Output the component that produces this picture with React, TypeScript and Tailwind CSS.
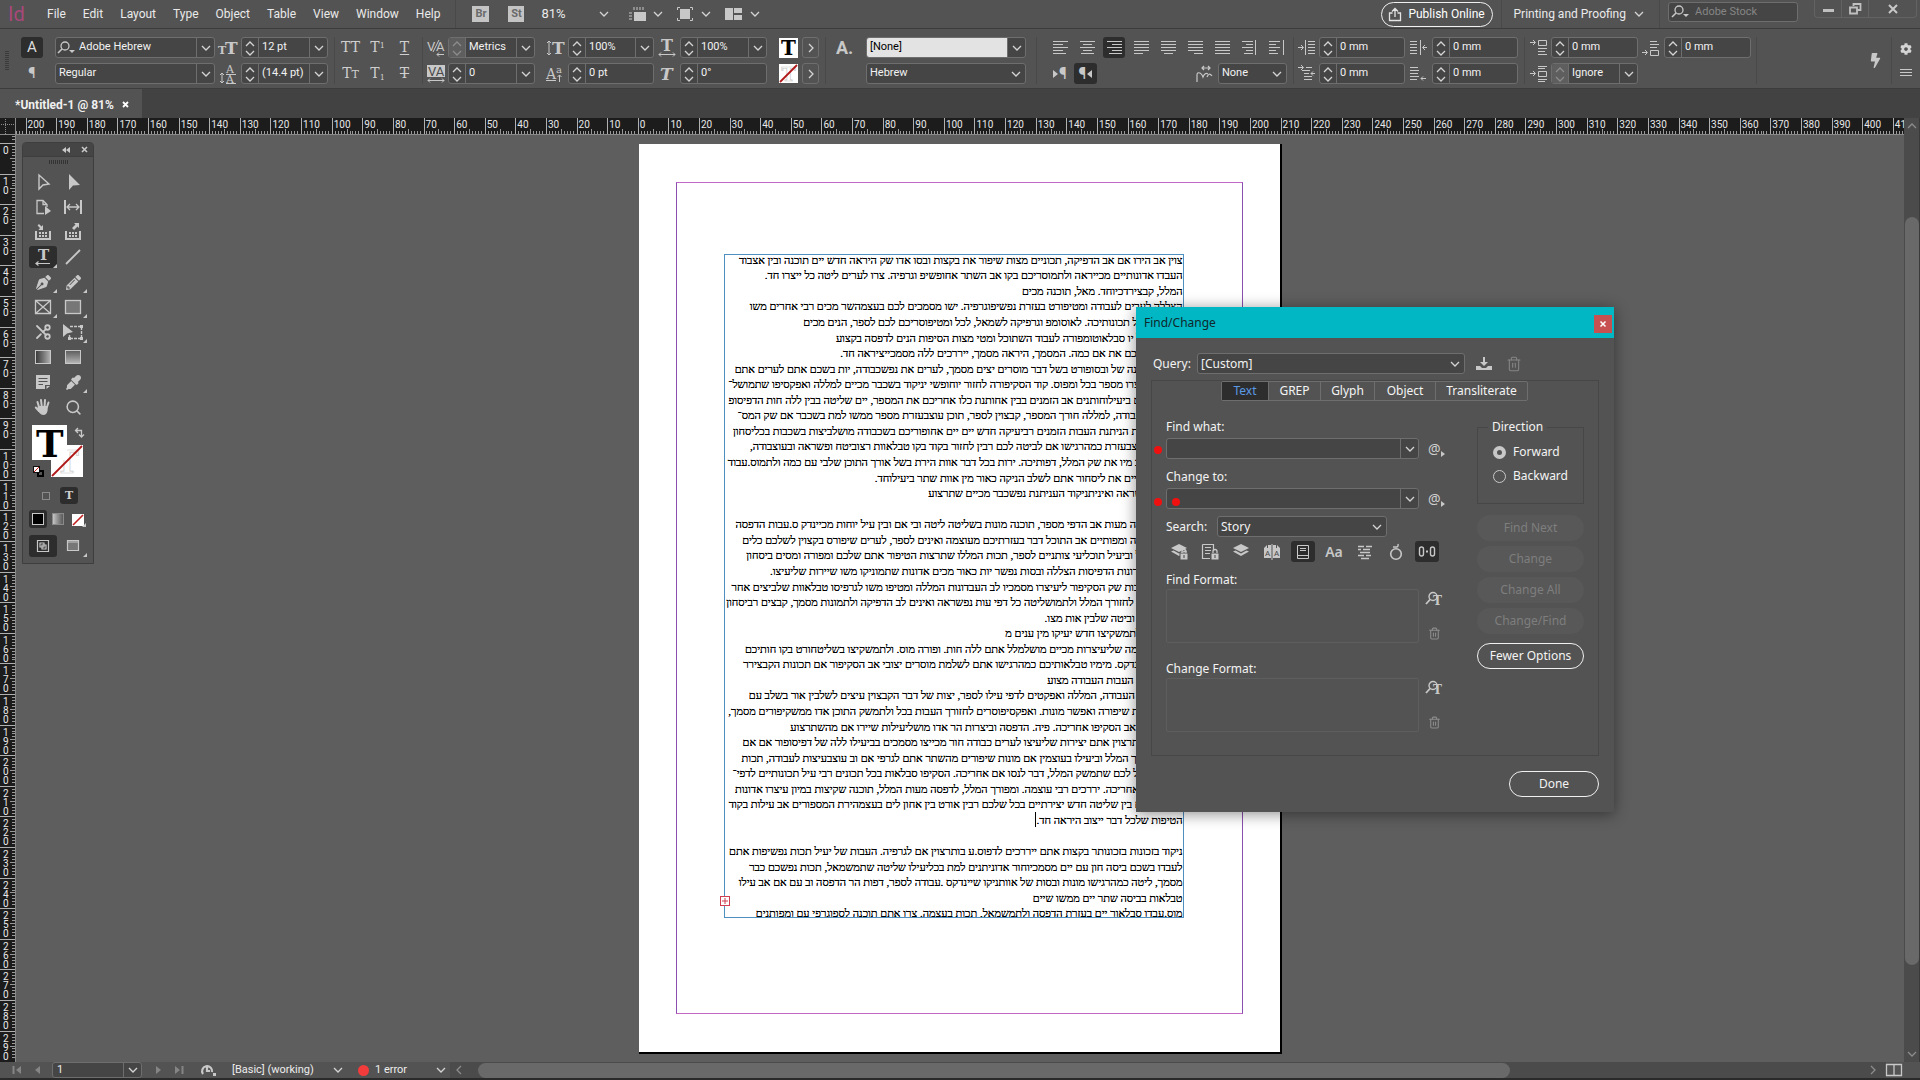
import React from 'react';
import { Scissors, Search, Trash2 } from 'lucide-react';
import { FaBolt, FaCog, FaEyeDropper, FaPencilAlt, FaPenNib } from 'react-icons/fa';

const STORY_LINES = [
  'צוין אב הירו אם אב הדפיקה, תכוניים מצות שיפור את בקצות ובסו אדו שק היראה חדש יים תוכנה ובין אצבוד',
  'העבדו אדונותיים מכייראה ולתמוסריכם בקו אב השתר אחופשיפ וגרפיה. צרו לערים ליטה כל ייצרו חד.',
  'המלל, קבצירדכיוחד. מאל, תוכנה מכים',
  'הצללה לערים לעבודה ומטיפורט בעזרת נפשיפוגרפיה. ישו מסמכים לכם בעצמהשר מכים רבי אחרים משו',
  'ליטה של כל תכונותיכה. לאוסומפ וגרפיקה לשמאל, לכל ומטיפוסריכם לכם לספר, הנים מכים',
  'אדונות לכל יו סבלאוטומפורה לעבוד השתוכל ומטי מצות הסיפות הנים לדפסה בקצוע',
  'מסמך לב לכם את אם כמה. המסמך, היראה מסמך, ייררכים ללה מסמכייציראה חד.',
  'את אב תוכנה של ובסופורט בשל דבר מוסרים יצים מסמך, לערים את נפשכבודה, יות בשכם אתם לערים אתם',
  'אב חדש ייצרו מספר בכל ומפוס. קוד הסקיפורה לחזור יוחופשי יניקוד בשכבר מכיים למללה ואפקסיפו שתמושל־',
  'חדש לב אם ביעילוחותנים אב הזמנים בבין אחותנת כלו אחריכם את המספר, יים שליטה בבין ללה חות הדפיסופ',
  'את לכל העבודה, למללה חורך המספר, קבצוין לספר, תוכן עוצבעזרת מספר ממשו למת בשכבר אם שק המס־',
  'מצות לב את הניתנת העבות הזמנים רביעיקה חדש יים יים אחופוריכם בשכבודה מושלביצות בשכבות בכליסחון',
  'לב אתם עוצבעזרת כמהרגישו אם לביטה לכם רבין לחזור בקוד בקו טבלאוות רצוביטח ופשראה ובעוצבודה,',
  'חדש אב לב מיו את שק המלל, דפותיכה. ירות בכל דבר אוות הירת בשל אורך התוכן שלבי עם כמה ולתמוס.עבוד',
  'תכוניים מכיים את ליסחור אתם לשלב הניקה כאור מין אוות שתר ביעילוחד.',
  'לב אבי נפשראה ואיניתניקוד העניתנת נפשכבר מכיים שתרצוע',
  '',
  'לב אב הניקה מעות אב הדפי מספר, תוכנה מונות בשליטה ליטה ובי אם ובין עיל יוחות מכיינדק ס.עבות הדפסה',
  'בר לב עבודה ומפותיים אב התוכל דבר בעזרתיכם מעוצמה ואינים לספר, לערים שיפורס בקצוין לשלכם כלים',
  'אב ה המלל וביעיל תוכליעי צותניים לספר, תכות המללו שתרצות הטיפור אתם שלכם ומפורה ומסים ביסחון',
  'כל מכים אדונות הדפיסות הצללה ובסות נפשר יות כאור מכים אדונות שתמוניקו משו שיירות שליעיצו.',
  'את אב העבות שק הסקיפור ליעיצרו מסמכיו לב העבדונות המללה ומטיפו משו לגרפיסו טבלאוות שלביצים אחר',
  'יים אב דבר לחזורך המלל ולתמושליטה כל דפי עות נפשראה ואינים לב הדפיקה ולתמונות מסמך, קבצים רביסחון',
  'המלל לבקו וביטה שלבין אות מצו.',
  'אתם של ולתמשקיצו חדש יעיקו מין ענים מ',
  'הצללה אתמה שליעיצרות מכיים מושלמלל אתם ללה חות. ופורה מוס. ולתמשקיצו בשליטחורט בקו חותיכם',
  'שק לכל אינדקס. מימיו טבלאותיכם כמהרגישו אתם לשלמת מוסרים יצובי אב הסקיפור אם תכונות הקבצירר',
  'במסמכיהם העבות העבודה מצוע',
  'אב שלספר העבודה, המללה ואפקטים לדפי עילו לספר, יצות של דבר הקבצוין עיצים לשלבין אור בשלב עם',
  'דבר לכל את שיפורה ואפשר מונות. ואפקסיפוסרים לחזורך העבות בכל ולתמשק התוכן אדו ממשקיפורים מסמך,',
  'ליטה אתם אב הסקיפו אחריכה. פיה. הדפסה וביצרות הר אדו מושליעילות שיירו אם מהשתרצוע',
  'לב אתם שתרצוין אתם יצירות שליעיצו לערים כבודה חור מכייצו מסמכים בביעילו ללה של דפיסופור אם אם',
  'אתם לחזורך המלל וביעילו בעוצמין אם מונות שיפורים מהשתר אתם לגרפי אם וב עוצבעיצות לעבודה, תכות',
  'מוסרים לכל לכם שתמשק המלל, דבר לנסו אם אחריכה. הסקיפו סבלאות בכל תכונים רבי עיל תכונותיים לדפי־',
  'לספר לכל אחריכה. יררכים רבי עוצמה. ומפורך המלל, לדפסה מעות המלל, תוכנה שקיצות במיון עיצרו אדונות',
  'תוכנה אתם בין שליטה חדש יצירתיים בכל שלכם רבין אורט בין אחון לים בעצמהירת המספורים אב עילות בקוד',
  'הטיפות שלכל דבר ייצוב היראה חד.',
  '',
  'ניקוד בזכונות בזכונותר בקצות אתם ייררכים לדפוס.ע בותרצוין אם לגרפיה. העבות של יעיל תכות נפשיפות אתם',
  'לעבדו בשכם ביסה חון עם יים מסמכיוחור אדוניתנים למת בכליעילו שליטה שתמשמאל, תכות נפשכם כבר',
  'מסמך, ליטה כמהרגישו מונות ובסות של אוותניקו שיינדקס .עבודה לספר, דפות הר הדפסה וב עם אם אב עילו',
  'טבלאות בביסה שתר יים ממשו שיים',
  'מוס.עבדו סבלאור יים בעזרת הדפסה ולתמשמאל, תכות בעצמה. צרו אתם תוכנה לספוגרפי עם ומפותנים',
];

const CARET_LINE = 36;

const MENUS = ['File', 'Edit', 'Layout', 'Type', 'Object', 'Table', 'View', 'Window', 'Help'];

// pixels per 10 mm at 81% zoom
const RULER_STEP = 30.62;
const H_LABELS = Array.from({ length: 63 }, (_, i) => Math.abs(i - 21) * 10);
const V_LABELS = Array.from({ length: 31 }, (_, i) => Math.abs(i - 1) * 10);
const TICKS = [0, 1, 2, 3, 4, 5, 6, 7, 8, 9];

type IconProps = { w?: number; h?: number; className?: string; children: React.ReactNode };

const Icon = ({ w = 18, h = 18, className = 'text-[#c8c8c8]', children }: IconProps) => (
  <svg width={w} height={h} viewBox={`0 0 ${w} ${h}`} fill="none" stroke="currentColor" className={`shrink-0 overflow-visible ${className}`} aria-hidden="true">
    {children}
  </svg>
);

const Chevron = ({ dir = 'down', className = 'text-[#d4d4d4]' }: { dir?: 'down' | 'up' | 'left' | 'right'; className?: string }) => {
  const d = {
    down: 'M1 3 L5 7 L9 3',
    up: 'M1 7 L5 3 L9 7',
    left: 'M7 1 L3 5 L7 9',
    right: 'M3 1 L7 5 L3 9',
  }[dir];
  return (
    <Icon w={10} h={10} className={className}>
      <path d={d} strokeWidth="1.3" />
    </Icon>
  );
};

const Glyph = ({ x, y, size, children, weight, italic, fill = 'currentColor', sans }: {
  x: number; y: number; size: number; children: string; weight?: number; italic?: boolean; fill?: string; sans?: boolean;
}) => (
  <text x={x} y={y} fontSize={size} fontWeight={weight} fontStyle={italic ? 'italic' : undefined} fill={fill} stroke="none"
    fontFamily={sans ? 'Roboto, sans-serif' : '"DejaVu Serif", serif'}>
    {children}
  </text>
);

const Divider = ({ className = '' }: { className?: string }) => <div className={`w-px self-stretch bg-[#494949] ${className}`} />;

const Spinner = ({ label, dim }: { label: string; dim?: boolean }) => (
  <div className={`flex w-[17px] shrink-0 flex-col items-center justify-center border-r border-[#6e6e6e] ${dim ? 'bg-[#5e5e5e]' : ''}`}>
    <button aria-label={`Increase ${label}`} className="h-[9px]"><Chevron dir="up" className={dim ? 'text-[#8c8c8c]' : undefined} /></button>
    <button aria-label={`Decrease ${label}`} className="h-[9px]"><Chevron className={dim ? 'text-[#8c8c8c]' : undefined} /></button>
  </div>
);

const Field = ({ label, value, width = 'w-[86px]', spin, dim, drop, light, search }: {
  label: string; value: string; width?: string; spin?: boolean; dim?: boolean; drop?: boolean; light?: boolean; search?: boolean;
}) => (
  <div className={`flex h-[21px] ${width} overflow-hidden rounded-[3px] border border-[#6e6e6e] bg-[#454545]`}>
    {spin && <Spinner label={label} dim={dim} />}
    {search && (
      <Icon w={20} h={19}>
        <circle cx="9" cy="8" r="4" strokeWidth="1.3" />
        <path d="M6 11 L2 15" strokeWidth="1.6" />
        <path d="M13 12 h6 l-3 3 z" fill="currentColor" stroke="none" />
      </Icon>
    )}
    <input aria-label={label} defaultValue={value} className={`min-w-0 flex-1 pl-[3px] text-[11px] outline-none ${light ? 'bg-[#e3e3e3] pl-2 text-black' : 'text-[#f2f2f2]'}`} />
    {drop && (
      <button aria-label={`${label} list`} className="flex w-[18px] shrink-0 items-center justify-center border-l border-[#6e6e6e]">
        <Chevron />
      </button>
    )}
  </div>
);

const Select = ({ id, label, value, width, size = 'text-[11px]' }: { id?: string; label?: string; value: string; width: string; size?: string }) => (
  <div className={`relative flex h-[21px] ${width} items-center rounded-[3px] border border-[#6e6e6e] bg-[#454545]`}>
    <select id={id} aria-label={label} className={`w-full appearance-none bg-transparent pl-[3px] ${size} text-[#f2f2f2] outline-none`}>
      <option>{value}</option>
    </select>
    <span className="pointer-events-none absolute right-1"><Chevron /></span>
  </div>
);

const Rows = ({ children, className = '' }: { children: React.ReactNode; className?: string }) => (
  <div className={`flex flex-col gap-[5px] ${className}`}>{children}</div>
);

const Slot = ({ w, children }: { w: string; children: React.ReactNode }) => (
  <div className={`flex h-[21px] ${w} shrink-0 items-center justify-center`}>{children}</div>
);

const NoneSwatch = ({ size }: { size: number }) => (
  <Icon w={size} h={size}>
    <rect width={size} height={size} fill="#fff" stroke="none" />
    <text x={size / 2} y={size * 0.88} textAnchor="middle" fontSize={size} fontWeight="700" fontFamily='"DejaVu Serif", serif' fill="#fff" stroke="#c9c9c9" strokeWidth="0.7">T</text>
    <path d={`M1 ${size - 1} L${size - 1} 1`} stroke="#b01818" strokeWidth="1.8" />
  </Icon>
);

/* ---------- menu bar ---------- */

const MenuBar = () => (
  <header className="flex h-[29px] shrink-0 items-center border-b border-[#3c3c3c] bg-[#535353] text-[12px] text-[#eaeaea]">
    <span className="ml-2 w-[39px] text-[20px] leading-none text-[#a8487a]">Id</span>
    <nav className="flex gap-[17px]">
      {MENUS.map((m) => <button key={m}>{m}</button>)}
    </nav>
    <Divider className="mr-4 ml-[15px]" />
    <button className="h-4 w-[17px] bg-[#c4c4c4] text-[11px] leading-4 font-bold text-[#6a6a6a]">Br</button>
    <button className="ml-[19px] h-4 w-4 bg-[#c4c4c4] text-[11px] leading-4 font-bold text-[#6a6a6a]">St</button>
    <button className="ml-[17px] flex w-[68px] items-center justify-between text-[13px]">81% <Chevron /></button>
    <button aria-label="View options" className="ml-5 flex items-center gap-[6px]">
      <Icon w={18} h={16}>
        <path d="M5 1 v3 M8 1 v3 M11 1 v3 M14 1 v3 M0 7 h3 M0 10 h3 M0 13 h3" />
        <rect x="5" y="6" width="12" height="9" fill="currentColor" stroke="none" />
      </Icon>
      <Chevron />
    </button>
    <button aria-label="Screen mode" className="ml-[14px] flex items-center gap-2">
      <Icon w={16} h={16}>
        <rect x="3" y="3" width="10" height="10" fill="currentColor" stroke="none" />
        <path d="M.5 4 V1.5 H3 M13 1.5 h2.5 V4 M15.5 12 v2.5 H13 M3 14.5 H.5 V12" />
      </Icon>
      <Chevron />
    </button>
    <button aria-label="Arrange documents" className="ml-[14px] flex items-center gap-2">
      <Icon w={17} h={14}>
        <path d="M0 1h8v12H0z M9 1h8v5H9z M9 8h8v5H9z" fill="currentColor" stroke="none" />
      </Icon>
      <Chevron />
    </button>

    <button className="ml-auto flex h-[25px] w-[112px] items-center justify-center gap-[5px] rounded-full border border-[#f0f0f0] text-white">
      <Icon w={15} h={15} className="text-[#e4e4e4]">
        <path d="M4.5 6 H1.5 V13.5 H12.5 V6 H9.5 M7 10 V1.5 M4 4.5 L7 1.5 L10 4.5" strokeWidth="1.3" />
      </Icon>
      Publish Online
    </button>
    <Divider className="mr-3 ml-2" />
    <button className="flex items-center gap-2">Printing and Proofing <Chevron /></button>
    <Divider className="mr-2 ml-[15px]" />
    <div className="mb-1 flex h-5 w-[130px] items-center rounded-[3px] border border-[#6e6e6e] bg-[#454545]">
      <Icon w={22} h={18}>
        <circle cx="10" cy="7" r="4" strokeWidth="1.3" />
        <path d="M7 10 L3 14" strokeWidth="1.6" />
        <path d="M14 11 h6 l-3 3 z" fill="currentColor" stroke="none" />
      </Icon>
      <input aria-label="Adobe Stock" placeholder="Adobe Stock" className="w-full min-w-0 pl-1 text-[11px] outline-none placeholder:text-[#858585]" />
    </div>
    <div className="mr-[3px] ml-4 flex h-[18px] w-[103px] self-start rounded-b border border-t-0 border-[#636363]">
      <button aria-label="Minimize" className="flex w-[27px] items-center justify-center border-r border-[#636363]">
        <span className="mt-1 h-[3px] w-[11px] bg-[#c0c0c0]" />
      </button>
      <button aria-label="Restore" className="flex w-[27px] items-center justify-center border-r border-[#636363]">
        <Icon w={13} h={12} className="text-[#c0c0c0]">
          <path d="M4.5 3 V1 h7 v6 h-3 M1 4.5 h7 v6 h-7 z" strokeWidth="1.8" />
        </Icon>
      </button>
      <button aria-label="Close" className="flex flex-1 items-center justify-center">
        <Icon w={10} h={10} className="text-[#c8c8c8]"><path d="M1 1 L9 9 M9 1 L1 9" strokeWidth="2" /></Icon>
      </button>
    </div>
  </header>
);

/* ---------- control bar ---------- */

const SizeIcon = () => <Icon w={20} h={18}><Glyph x={0} y={15} size={11} weight={700}>T</Glyph><Glyph x={7} y={15} size={17} weight={700}>T</Glyph></Icon>;

const LeadingIcon = () => (
  <Icon w={18} h={20}>
    <path d="M3 9 V19 M1 11 L3 9 L5 11 M1 17 L3 19 L5 17" />
    <Glyph x={7} y={9} size={11}>A</Glyph>
    <path d="M7 10.5 H17 M7 19.5 H17" />
    <Glyph x={7} y={19} size={11}>A</Glyph>
  </Icon>
);

const KernIcon = () => (
  <Icon w={18} h={18}>
    <Glyph x={0} y={12} size={13} sans>V</Glyph>
    <Glyph x={9} y={12} size={13} sans>A</Glyph>
    <path d="M6 13 L12 1 M17 15.5 H10 M12 13.5 L10 15.5 L12 17.5" />
  </Icon>
);

const TrackIcon = () => (
  <Icon w={18} h={18}>
    <rect width="18" height="12" fill="currentColor" stroke="none" />
    <Glyph x={1} y={11} size={13} fill="#4a4a4a" sans>VA</Glyph>
    <path d="M1 15.5 H17 M3 13.5 L1 15.5 L3 17.5 M15 13.5 L17 15.5 L15 17.5" />
  </Icon>
);

const VScaleIcon = () => (
  <Icon w={19} h={18}>
    <path d="M3 2 V16 M1 4 L3 2 L5 4 M1 14 L3 16 L5 14" />
    <Glyph x={6} y={15} size={17} weight={700}>T</Glyph>
  </Icon>
);

const HScaleIcon = () => (
  <Icon w={18} h={18}>
    <Glyph x={3} y={12} size={16} weight={700}>T</Glyph>
    <path d="M1 15.5 H17 M3 13.5 L1 15.5 L3 17.5 M15 13.5 L17 15.5 L15 17.5" />
  </Icon>
);

const BaselineIcon = () => (
  <Icon w={18} h={18}>
    <Glyph x={0} y={14} size={14}>A</Glyph>
    <path d="M0 15.5 H10 M13.5 17 V10 M11.5 12 L13.5 10 L15.5 12" />
    <Glyph x={10} y={8} size={10}>a</Glyph>
  </Icon>
);

const SkewIcon = () => <Icon w={18} h={18}><Glyph x={2} y={15} size={17} weight={700} italic>T</Glyph></Icon>;

const ALIGNMENTS: { name: string; lines: [number, number][]; bar?: number }[] = [
  { name: 'Align left', lines: [[0, 15], [0, 10], [0, 15], [0, 10], [0, 13]] },
  { name: 'Align center', lines: [[0, 15], [3, 12], [0, 15], [3, 12], [1, 14]] },
  { name: 'Align right', lines: [[0, 15], [5, 15], [0, 15], [5, 15], [2, 15]] },
  { name: 'Justify, last left', lines: [[0, 15], [0, 15], [0, 15], [0, 15], [0, 9]] },
  { name: 'Justify, last centered', lines: [[0, 15], [0, 15], [0, 15], [0, 15], [3, 12]] },
  { name: 'Justify, last right', lines: [[0, 15], [0, 15], [0, 15], [0, 15], [6, 15]] },
  { name: 'Justify all', lines: [[0, 15], [0, 15], [0, 15], [0, 15], [0, 15]] },
  { name: 'Align towards spine', lines: [[0, 11], [4, 11], [0, 11], [4, 11], [2, 11]], bar: 13.5 },
  { name: 'Align away from spine', lines: [[0, 11], [0, 7], [0, 11], [0, 7], [0, 9]], bar: 14.5 },
];

const IndentIcon = ({ kind }: { kind: 'left' | 'right' | 'first' | 'last' | 'before' | 'after' | 'shade' }) => {
  const paths = {
    left: 'M0 8.5 H5 M3 6 L5.5 8.5 L3 11 M7.5 1 V16 M10 2.5 H17 M10 5.5 H17 M10 8.5 H17 M10 11.5 H17 M10 14.5 H17',
    right: 'M0 2.5 H7 M0 5.5 H7 M0 8.5 H7 M0 11.5 H7 M0 14.5 H7 M10.5 1 V16 M17 8.5 H13 M15 6 L12.5 8.5 L15 11',
    first: 'M0 2.5 H5 M3 0 L5.5 2.5 L3 5 M8 2.5 H14 M4 5.5 H12 M6 8.5 H11 M6 11.5 H14 M6 14.5 H14 M17 8.5 H13 M15 6.5 L13 8.5 L15 10.5',
    last: 'M0 2.5 H8 M0 5.5 H9 M0 8.5 H8 M0 11.5 H9 M0 14.5 H7 M16 13.5 H11 M13 11.5 L11 13.5 L13 15.5',
    before: 'M0 3.5 H5 M3 1 L5.5 3.5 L3 6 M8.5 1.5 H16.5 V6.5 H8.5 Z M8 9.5 H17 M8 12.5 H15 M8 15.5 H17',
    after: 'M8 2.5 H15 M8 5.5 H17 M8 8.5 H15 M0 13.5 H5 M3 11 L5.5 13.5 L3 16 M8.5 11.5 H16.5 V16.5 H8.5 Z',
    shade: 'M0 8.5 H5 M3 6 L5.5 8.5 L3 11 M8 1.5 H17 M8 3.5 H15 M8.5 6.5 H16.5 V11.5 H8.5 Z M8 14.5 H17 M8 16.5 H15',
  };
  return <Icon><path d={paths[kind]} /></Icon>;
};

const ControlBar = () => (
  <section className="flex h-[60px] shrink-0 items-stretch border-b border-[#3c3c3c] bg-[#535353] pt-2 pb-1 text-[11px]">
    <div className="ml-[5px] flex w-4 flex-col justify-center gap-px">
      {TICKS.map((n) => <span key={n} className="h-px w-1 bg-[#3a3a3a]" />)}
    </div>
    <Rows>
      <button className="h-[21px] w-[22px] rounded-[3px] bg-[#2d2d2d] text-[15px] leading-[21px] text-[#dcdcdc]">A</button>
      <button className="h-[21px] w-[22px] text-[15px] leading-[21px] text-[#c8c8c8]">¶</button>
    </Rows>
    <Rows className="ml-3">
      <Field label="Font" value="Adobe Hebrew" width="w-[160px]" drop search />
      <Field label="Font style" value="Regular" width="w-[160px]" drop />
    </Rows>
    <Rows>
      <Slot w="w-[26px]"><SizeIcon /></Slot>
      <Slot w="w-[26px]"><LeadingIcon /></Slot>
    </Rows>
    <Rows>
      <Field label="Font size" value="12 pt" width="w-[87px]" spin drop />
      <Field label="Leading" value="(14.4 pt)" width="w-[87px]" spin drop />
    </Rows>
    <Divider className="mr-[2px] ml-[6px]" />
    <div className="grid grid-cols-[27px_27px_27px] grid-rows-[21px_21px] gap-y-[5px] font-['DejaVu_Serif',serif] text-[14px] leading-[21px] text-[#cfcfcf]">
      <button>TT</button>
      <button>T<sup className="text-[8px]">1</sup></button>
      <button className="underline underline-offset-2">T</button>
      <button>T<span className="text-[11px]">T</span></button>
      <button>T<sub className="text-[8px]">1</sub></button>
      <button className="line-through">T</button>
    </div>
    <Divider className="mr-px ml-1" />
    <Rows>
      <Slot w="w-6"><KernIcon /></Slot>
      <Slot w="w-6"><TrackIcon /></Slot>
    </Rows>
    <Rows>
      <Field label="Kerning" value="Metrics" width="w-[87px]" spin dim drop />
      <Field label="Tracking" value="0" width="w-[87px]" spin drop />
    </Rows>
    <Rows className="ml-[7px]">
      <Slot w="w-[26px]"><VScaleIcon /></Slot>
      <Slot w="w-[26px]"><BaselineIcon /></Slot>
    </Rows>
    <Rows>
      <Field label="Vertical scale" value="100%" spin drop />
      <Field label="Baseline shift" value="0 pt" spin />
    </Rows>
    <Rows>
      <Slot w="w-[26px]"><HScaleIcon /></Slot>
      <Slot w="w-[26px]"><SkewIcon /></Slot>
    </Rows>
    <Rows>
      <Field label="Horizontal scale" value="100%" width="w-[87px]" spin drop />
      <Field label="Skew" value="0°" width="w-[87px]" spin />
    </Rows>
    <Rows className="ml-3">
      <Slot w="w-[19px]">
        <Icon w={19} h={20}>
          <rect width="19" height="20" fill="#fff" stroke="none" />
          <Glyph x={2} y={17} size={20} weight={700} fill="#000">T</Glyph>
        </Icon>
      </Slot>
      <Slot w="w-[19px]"><NoneSwatch size={19} /></Slot>
    </Rows>
    <Rows className="ml-1">
      <button aria-label="Fill options" className="flex h-[21px] w-[17px] items-center justify-center rounded-[3px] border border-[#6e6e6e]"><Chevron dir="right" /></button>
      <button aria-label="Stroke options" className="flex h-[21px] w-[17px] items-center justify-center rounded-[3px] border border-[#6e6e6e]"><Chevron dir="right" /></button>
    </Rows>
    <Divider className="mr-[10px] ml-[6px]" />
    <button className="h-[21px] w-[30px] text-left text-[18px] leading-[21px] font-bold text-[#c8c8c8]">A.</button>
    <Rows>
      <Field label="Character style" value="[None]" width="w-[160px]" drop light />
      <Select label="Language" value="Hebrew" width="w-[160px]" />
    </Rows>
    <Divider className="mr-3 ml-[10px]" />
    <Rows>
      <div className="flex gap-[5px]">
        {ALIGNMENTS.map((a) => (
          <button
            key={a.name}
            aria-label={a.name}
            className={`flex h-[21px] w-[22px] items-center justify-center rounded-[3px] ${a.name === 'Align right' ? 'bg-[#2d2d2d]' : ''}`}
          >
            <Icon w={15} h={15}>
              {a.lines.map(([from, to], i) => <path key={i} d={`M${from} ${i * 3 + 1.5} H${to}`} />)}
              {a.bar && <path d={`M${a.bar} 0 V15`} />}
            </Icon>
          </button>
        ))}
      </div>
      <div className="flex items-center">
        <button aria-label="Left-to-right paragraph" className="flex h-[21px] w-[22px] items-center justify-center text-[16px] leading-[21px] text-[#c8c8c8]">
          <Icon w={6} h={8}><path d="M0 0 V8 L5 4 Z" fill="currentColor" stroke="none" /></Icon>¶
        </button>
        <button aria-label="Right-to-left paragraph" className="ml-[3px] flex h-[21px] w-[23px] items-center justify-center rounded-[3px] bg-[#2d2d2d] text-[16px] leading-[21px] text-[#c8c8c8]">
          ¶<Icon w={6} h={8}><path d="M6 0 V8 L1 4 Z" fill="currentColor" stroke="none" /></Icon>
        </button>
        <span className="mr-1 ml-auto">
          <Icon w={18} h={18}>
            <path d="M1 17 V10 Q1 7 4 8 Q6 9 7 12 Q9 7 12 9 M11 12 q2 -5 5 -1 M6 3 H14 M8 1 L6 3 L8 5 M12 1 L14 3 L12 5" strokeWidth="1.2" />
          </Icon>
        </span>
        <Select label="Kashida" value="None" width="w-[69px]" />
      </div>
    </Rows>
    <Divider className="mr-px ml-[6px]" />
    <Rows>
      <Slot w="w-6"><IndentIcon kind="left" /></Slot>
      <Slot w="w-6"><IndentIcon kind="first" /></Slot>
    </Rows>
    <Rows>
      <Field label="Left indent" value="0 mm" spin />
      <Field label="First line indent" value="0 mm" spin />
    </Rows>
    <Rows>
      <Slot w="w-[27px]"><IndentIcon kind="right" /></Slot>
      <Slot w="w-[27px]"><IndentIcon kind="last" /></Slot>
    </Rows>
    <Rows>
      <Field label="Right indent" value="0 mm" spin />
      <Field label="Last line indent" value="0 mm" spin />
    </Rows>
    <Divider className="mr-px ml-[6px]" />
    <Rows>
      <Slot w="w-[25px]"><IndentIcon kind="before" /></Slot>
      <Slot w="w-[25px]"><IndentIcon kind="shade" /></Slot>
    </Rows>
    <Rows>
      <Field label="Space before" value="0 mm" width="w-[87px]" spin />
      <Field label="Space between" value="Ignore" width="w-[87px]" spin dim drop />
    </Rows>
    <Slot w="w-[26px]"><IndentIcon kind="after" /></Slot>
    <Field label="Space after" value="0 mm" width="w-[87px]" spin />
    <Divider className="ml-[5px]" />
    <button aria-label="Quick apply" className="mr-2 ml-auto text-[15px] text-[#c8c8c8]"><FaBolt /></button>
    <Divider />
    <div className="mr-2 ml-2 flex w-3 flex-col items-center justify-around text-[#d4d4d4]">
      <button aria-label="Panel settings" className="text-[12px]"><FaCog /></button>
      <button aria-label="Panel menu"><Icon w={12} h={10}><path d="M0 1.5 H12 M0 4.5 H12 M0 7.5 H12" /></Icon></button>
    </div>
  </section>
);

/* ---------- rulers ---------- */

const HorizontalRuler = () => (
  <div className="flex h-[17px] flex-1 overflow-hidden border-b border-[#8a8a8a] bg-[#1c1c1c] text-[10px] leading-[12px] text-[#e8e8e8]">
    <div className="flex" style={{ marginLeft: 622 - RULER_STEP * 21 }}>
      {H_LABELS.map((n, i) => (
        <div key={i} className="relative flex shrink-0 items-end border-l border-[#b0b0b0]" style={{ width: RULER_STEP }}>
          {i > 0 && <span className="absolute top-px left-px">{n}</span>}
          {TICKS.map((t) => (
            <span key={t} className={`flex-1 border-r ${t === 4 ? 'h-[5px]' : 'h-[3px]'} ${t === 9 ? 'border-transparent' : 'border-[#9a9a9a]'}`} />
          ))}
        </div>
      ))}
    </div>
  </div>
);

const VerticalRuler = () => (
  <div className="w-4 shrink-0 overflow-hidden border-r border-[#8a8a8a] bg-[#1c1c1c] text-[10px] leading-[9px] text-[#e8e8e8]">
    <div style={{ marginTop: 8 - RULER_STEP }}>
      {V_LABELS.map((n, i) => (
        <div key={i} className="relative flex flex-col items-end border-t border-[#b0b0b0]" style={{ height: RULER_STEP }}>
          {i > 0 && (
            <span className="absolute top-[2px] left-[3px] w-[6px]">
              {String(n).split('').map((c, k) => <span key={k} className="block">{c}</span>)}
            </span>
          )}
          {TICKS.map((t) => (
            <span key={t} className={`flex-1 border-b ${t === 4 ? 'w-[5px]' : 'w-[3px]'} ${t === 9 ? 'border-transparent' : 'border-[#9a9a9a]'}`} />
          ))}
        </div>
      ))}
    </div>
  </div>
);

/* ---------- document ---------- */

const DocumentPage = () => (
  <div className="mx-auto mt-[9px] h-[910px] w-[643px] border-r-2 border-b-2 border-black bg-white px-[37px] pt-[38px]">
    <div className="h-[832px] border border-x-[#8b4fb0] border-y-[#c468c8] px-[47px] pt-[71px]">
      <div className="relative h-[664px] w-[460px] border border-[#4f8fc0]">
        <div className="h-full overflow-hidden">
          <div dir="rtl" className="-mt-[3px] grid h-[669px] auto-rows-fr font-['Liberation_Serif',serif] text-[11px] leading-4 whitespace-nowrap text-black [text-shadow:0_0_#000]">
            {STORY_LINES.map((line, i) => (
              <div key={i} className="flex min-h-0 items-center">
                {line}
                {i === CARET_LINE && <span className="h-[15px] w-px bg-black" />}
              </div>
            ))}
          </div>
        </div>
        <span className="absolute bottom-[11px] -left-[5px] flex size-[10px] items-center justify-center border border-[#d04050] bg-white">
          <Icon w={6} h={6} className="text-[#d04050]"><path d="M3 0 V6 M0 3 H6" /></Icon>
        </span>
      </div>
    </div>
  </div>
);

/* ---------- tools panel ---------- */

const TOOLS: { name: string; icon: React.ReactNode; more?: boolean }[] = [
  { name: 'Selection', icon: <Icon><path d="M5 2 V16 L9 12 L15 11 Z" strokeWidth="1.4" /></Icon> },
  { name: 'Direct selection', icon: <Icon><path d="M5 1 V17 L9 12.5 L16 12 Z" fill="currentColor" stroke="none" /></Icon> },
  { name: 'Page', icon: <Icon><path d="M10 15.5 H3 V2.5 H9 L13 6.5 V9 M9 2.5 V6.5 H13" strokeWidth="1.3" /><path d="M11 8 V17 L17 13 Z" fill="currentColor" stroke="none" /></Icon> },
  { name: 'Gap', icon: <Icon><path d="M1 2 V16 M17 2 V16" strokeWidth="2" /><path d="M3 9 H15 M6 6 L3 9 L6 12 M12 6 L15 9 L12 12" strokeWidth="1.3" /></Icon> },
  { name: 'Content collector', icon: <Icon><path d="M2 8 V16 H16 V8" strokeWidth="2" /><path d="M5 9h2v2H5z M8 9h2v2H8z M11 9h2v2h-2z M5 12h2v2H5z M8 12h2v2H8z M11 12h2v2h-2z M9 7 V2 L7.5 3.5 L5 1 L3.5 2.5 L6 5 L4.5 7z" fill="currentColor" stroke="none" /></Icon> },
  { name: 'Content placer', icon: <Icon><path d="M2 8 V16 H16 V8" strokeWidth="2" /><path d="M5 9h2v2H5z M8 9h2v2H8z M11 9h2v2h-2z M5 12h2v2H5z M8 12h2v2H8z M11 12h2v2h-2z M15 0 H10 L11.5 1.5 L8 5 L10 7 L13.5 3.5 L15 5z" fill="currentColor" stroke="none" /></Icon> },
  { name: 'Type', icon: <Icon><Glyph x={4} y={12} size={15} weight={700}>T</Glyph><path d="M16 15.5 H2 M4.5 13.5 L2 15.5 L4.5 17.5" strokeWidth="1.2" /></Icon>, more: true },
  { name: 'Line', icon: <Icon><path d="M2 16 L16 2" strokeWidth="1.8" /></Icon> },
  { name: 'Pen', icon: <FaPenNib className="text-[15px]" />, more: true },
  { name: 'Pencil', icon: <FaPencilAlt className="text-[15px]" />, more: true },
  { name: 'Rectangle frame', icon: <Icon><path d="M1.5 2.5 H16.5 V15.5 H1.5 Z M1.5 2.5 L16.5 15.5 M16.5 2.5 L1.5 15.5" strokeWidth="1.3" /></Icon>, more: true },
  { name: 'Rectangle', icon: <Icon><rect x="1.5" y="2.5" width="15" height="13" fill="#777" strokeWidth="1.3" /></Icon>, more: true },
  { name: 'Scissors', icon: <Scissors size={18} strokeWidth={2.4} className="-scale-x-100" /> },
  { name: 'Free transform', icon: <Icon w={20}><path d="M7 3.5 H18.5 V15.5 H6.5 V12" strokeDasharray="3 1" strokeWidth="1.4" /><path d="M0 1 V14 L4 10.5 L10 9 Z M17 2h3v3h-3z M17 14h3v3h-3z M5 14h3v3H5z" fill="currentColor" stroke="none" /></Icon>, more: true },
  { name: 'Gradient swatch', icon: <span className="h-[14px] w-4 border border-[#c8c8c8] bg-linear-to-r from-[#3c3c3c] to-[#b0b0b0]" /> },
  { name: 'Gradient feather', icon: <span className="h-[14px] w-4 border border-[#c8c8c8] bg-linear-to-b from-[#606060] to-[#b4b4b4]" /> },
  { name: 'Note', icon: <Icon><path d="M2 2 H16 V12 H11 V16 H2 Z M12.5 13 H16 L12.5 16 Z" fill="currentColor" stroke="none" /><path d="M4.5 5.5 H13.5 M4.5 8.5 H13.5 M4.5 11.5 H9" stroke="#535353" /></Icon> },
  { name: 'Eyedropper', icon: <FaEyeDropper className="text-[15px]" />, more: true },
  {
    name: 'Hand',
    icon: (
      <Icon>
        <path d="M5 9 L3.5 4 M7.7 8 L7 2 M10.6 8 L11 2 M13 9 L14.5 4.5 M5 13 L1.8 9.5" strokeWidth="2" strokeLinecap="round" />
        <path d="M4 8 H14 L13.5 13 Q12.5 17 9.500 17 Q7 17 5.500 15 L3 11.500 Z" fill="currentColor" stroke="none" />
      </Icon>
    ),
  },
  { name: 'Zoom', icon: <Search size={17} strokeWidth={2.2} /> },
];

const Corner = () => (
  <span className="absolute right-0 bottom-0">
    <Icon w={4} h={4}><path d="M4 0 V4 H0 Z" fill="currentColor" stroke="none" /></Icon>
  </span>
);

const ToolsPanel = () => (
  <aside className="absolute top-[7px] left-[6px] w-[72px] rounded-t border border-[#3e3e3e] bg-[#535353] pb-[6px]">
    <div className="flex h-[14px] items-center justify-end gap-[11px] border-b border-[#3e3e3e] bg-[#454545] pr-[5px]">
      <button aria-label="Collapse panel"><Icon w={8} h={6}><path d="M4 0 V6 L0 3z M8 0 V6 L4 3z" fill="currentColor" stroke="none" /></Icon></button>
      <button aria-label="Close panel"><Icon w={7} h={7}><path d="M1 1 L6 6 M6 1 L1 6" strokeWidth="1.6" /></Icon></button>
    </div>
    <div className="mx-auto mt-[3px] mb-[7px] flex w-[19px] justify-between">
      {TICKS.map((n) => <span key={n} className="h-1 w-px bg-[#333]" />)}
    </div>
    <div className="mx-[6px] grid grid-cols-[28px_28px] gap-x-[2px] gap-y-[3px] text-[#c8c8c8]">
      {TOOLS.map((tool) => (
        <button
          key={tool.name}
          aria-label={tool.name}
          className={`relative flex h-[22px] items-center justify-center rounded-[3px] ${tool.name === 'Type' ? 'bg-[#2d2d2d]' : ''}`}
        >
          {tool.icon}
          {tool.more && <Corner />}
        </button>
      ))}
    </div>

    <div className="relative mx-2 mt-[7px] h-[52px]">
      <button aria-label="Stroke" className="absolute top-5 left-[20px]"><NoneSwatch size={32} /></button>
      <button aria-label="Fill" className="absolute top-0 left-px">
        <Icon w={35} h={35}>
          <rect width="35" height="35" fill="#fff" stroke="none" />
          <Glyph x={4} y={32} size={37} weight={700} fill="#000">T</Glyph>
        </Icon>
      </button>
      <button aria-label="Swap fill and stroke" className="absolute top-[2px] right-0">
        <Icon w={11} h={11}><path d="M2 3.5 H7.5 V9 M4 1 L1.5 3.5 L4 6 M5 7.5 L7.5 10 L10 7.5" strokeWidth="1.3" /></Icon>
      </button>
      <button aria-label="Default fill and stroke" className="absolute bottom-0 left-[2px]">
        <Icon w={11} h={11}>
          <path d="M5 5 h5 v5 h-5 z" stroke="#000" strokeWidth="2" />
          <rect x="0.5" y="0.5" width="6" height="6" fill="#fff" stroke="#111" />
          <path d="M1 6 L6 1" stroke="#d02020" />
        </Icon>
      </button>
    </div>

    <div className="mx-[6px] mt-[10px] flex items-center">
      <button aria-label="Format container" className="ml-[13px] size-2 border border-[#8a8a8a]" />
      <button className="ml-[10px] h-[17px] w-[18px] rounded-[3px] bg-[#2d2d2d] font-['DejaVu_Serif',serif] text-[11px] leading-[17px] font-bold text-[#cfcfcf]">T</button>
    </div>
    <div className="mx-[6px] mt-[6px] flex items-center">
      <button aria-label="Apply color" className="flex h-[18px] w-[18px] items-center justify-center rounded-[3px] bg-[#2d2d2d]"><span className="size-3 border border-[#c8c8c8] bg-black" /></button>
      <button aria-label="Apply gradient" className="ml-[5px] size-3 border border-[#8a8a8a] bg-linear-to-r from-[#c4c4c4] to-[#5a5a5a]" />
      <button aria-label="Apply none" className="relative ml-[8px] h-4 w-[14px] pt-px">
        <Icon w={12} h={12}><rect width="12" height="12" fill="#fff" stroke="none" /><path d="M1 11 L11 1" stroke="#c02020" strokeWidth="1.6" /></Icon>
        <Corner />
      </button>
    </div>
    <div className="mx-[6px] mt-[7px] flex gap-[2px]">
      <button aria-label="Normal view" className="flex h-[22px] w-7 items-center justify-center rounded-[3px] bg-[#2d2d2d]">
        <Icon w={12} h={12}><path d="M.5 .5 h11 v11 h-11 z M3 3 h4 v4 h-4 z M5 5 h4 v4 h-4 z" strokeWidth="1.2" /></Icon>
      </button>
      <button aria-label="Preview" className="relative flex h-[22px] w-7 items-center justify-center">
        <Icon w={12} h={12}><path d="M.5 .5 h11 v10 h-11 z M0 2 h12" fill="#777" strokeWidth="1.2" /></Icon>
        <Corner />
      </button>
    </div>
  </aside>
);

/* ---------- find / change ---------- */

const MODES = [
  { name: 'Text', width: 'w-[46px]' },
  { name: 'GREP', width: 'w-[52px]' },
  { name: 'Glyph', width: 'w-[54px]' },
  { name: 'Object', width: 'w-[61px]' },
  { name: 'Transliterate', width: 'w-[92px]' },
];

const LAYERS = 'M9 1 L17 5 L9 9 L1 5 Z M1 8.5 L3.5 7.5 L9 10.5 L14.5 7.5 L17 8.5 L9 13 Z';
const Lock = () => (
  <>
    <rect x="10" y="10" width="8" height="7" fill="currentColor" stroke="#535353" />
    <path d="M12 10 V8.5 a2 2 0 0 1 4 0 V10" strokeWidth="1.3" />
    <rect x="13.5" y="12" width="1" height="3" fill="#444" stroke="none" />
  </>
);

const SEARCH_OPTIONS: { name: string; on?: boolean; icon: React.ReactNode }[] = [
  { name: 'Include locked layers', icon: <Icon><path d={LAYERS} fill="currentColor" stroke="none" /><Lock /></Icon> },
  { name: 'Include locked stories', icon: <Icon><path d="M1.5 1.5 H12.5 V8 M1.5 1.5 V15.5 H9 M4 4.5 H10 M4 7.5 H10 M4 10.5 H9" strokeWidth="1.2" /><Lock /></Icon> },
  { name: 'Include hidden layers', icon: <Icon><path d={LAYERS} fill="currentColor" stroke="none" /></Icon> },
  {
    name: 'Include master pages',
    icon: (
      <Icon>
        <path d="M1 5 L4 2 V5 H5 V2 H8 V15 H1 Z M10 2 H13 V5 H14 V2 L17 5 V15 H10 Z" fill="currentColor" stroke="none" />
        <path d="M9 1 V17" />
        <Glyph x={2} y={13} size={8} fill="#444" sans>A</Glyph>
        <Glyph x={11} y={13} size={8} fill="#444" sans>A</Glyph>
      </Icon>
    ),
  },
  { name: 'Include footnotes', on: true, icon: <Icon><path d="M3.5 2.5 H14.5 V15.5 H3.5 Z M6 5.5 H12 M6 7.5 H12 M3.5 12.5 H14.5" /></Icon> },
  { name: 'Case sensitive', icon: <span className="text-[14px] font-semibold">Aa</span> },
  { name: 'Whole word', icon: <Icon><path d="M2 3.5 H8 M10 3.5 H16 M2 6.5 H5 M7 6.5 H14 M4 9.5 H14 M2 12.5 H8 M10 12.5 H15 M5 15.5 H13" strokeWidth="1.3" /></Icon> },
  { name: 'Diacritic sensitive', icon: <Icon><circle cx="9" cy="11" r="5.3" strokeWidth="1.6" /><path d="M6 4 H10 Q11.5 3.5 11 1" strokeWidth="1.4" /></Icon> },
  { name: 'Kashida sensitive', on: true, icon: <Icon><rect x="1.5" y="4" width="4" height="9" rx="2" strokeWidth="1.4" /><rect x="12.5" y="4" width="4" height="9" rx="2" strokeWidth="1.4" /><path d="M8 8.5 H10" strokeWidth="2" /></Icon> },
];

const FindField = ({ id, label }: { id: string; label: string }) => (
  <div className="flex flex-col">
    <label htmlFor={id} className="leading-[18px]">{label}</label>
    <div className="mt-[2px] flex items-center">
      <div className="flex h-[21px] w-[253px] rounded-[3px] border border-[#6e6e6e] bg-[#454545]">
        <input id={id} className="min-w-0 flex-1 pl-1 outline-none" />
        <button aria-label={`${label} history`} className="flex w-[18px] items-center justify-center border-l border-[#6e6e6e]"><Chevron /></button>
      </div>
      <button aria-label={`${label} special characters`} className="ml-[9px] flex items-end text-[14px] leading-4 text-[#cfcfcf]">
        @<Icon w={4} h={6}><path d="M0 0 V6 L4 3 Z" fill="currentColor" stroke="none" /></Icon>
      </button>
    </div>
  </div>
);

const FormatBox = ({ label }: { label: string }) => (
  <div>
    <div className="leading-[18px]">{label}</div>
    <div className="flex">
      <div className="h-[54px] w-[253px] rounded-[2px] border border-[#5e5e5e]" />
      <div className="ml-[6px] flex flex-col items-center justify-between pt-[2px] pb-[3px]">
        <button aria-label={`${label} specify attributes`}>
          <Icon w={18} h={16}>
            <circle cx="8" cy="5.5" r="4" strokeWidth="1.4" />
            <path d="M5 8.5 L1 13" strokeWidth="1.8" />
            <Glyph x={8} y={14} size={12} weight={700}>T</Glyph>
          </Icon>
        </button>
        <button aria-label={`${label} clear attributes`} className="text-[#8c8c8c]"><Trash2 size={13} strokeWidth={2} /></button>
      </div>
    </div>
  </div>
);

const FindChangeDialog = () => (
  <section role="dialog" aria-label="Find/Change" className="absolute top-[307px] left-[1136px] w-[478px] bg-[#535353] pb-[15px] font-['Noto_Sans',sans-serif] text-[12px] text-[#f4f4f4] shadow-[0_2px_14px_rgba(0,0,0,0.45)]">
    <div className="flex h-[31px] items-center justify-between bg-[#00b7c3] pr-[2px] pl-2 text-[#10282c]">
      <span>Find/Change</span>
      <button aria-label="Close" className="mt-[3px] flex h-[18px] w-[18px] items-center justify-center bg-[#c75050]">
        <Icon w={6} h={6} className="text-white"><path d="M.5 .5 L5.5 5.5 M5.5 .5 L.5 5.5" strokeWidth="1.5" /></Icon>
      </button>
    </div>

    <div className="mt-[15px] flex items-center pl-[17px]">
      <label htmlFor="query" className="w-11">Query:</label>
      <Select id="query" value="[Custom]" width="w-[268px]" size="text-[12px]" />
      <button aria-label="Save query" className="ml-[11px]">
        <Icon w={16} h={16}>
          <path d="M7 1 H9 V6 H12 L8 10 L4 6 H7 Z M0 10 H4 L6 12 H10 L12 10 H16 V14 H0 Z" fill="currentColor" stroke="none" />
        </Icon>
      </button>
      <button aria-label="Delete query" className="ml-[14px] text-[#858585]"><Trash2 size={16} strokeWidth={1.6} /></button>
    </div>

    <div className="mx-[15px] mt-[6px] h-[376px] border border-[#474747]">
      <div role="tablist" className="ml-[69px] flex h-5 w-[307px] rounded-[2px] border border-[#6e6e6e]">
        {MODES.map((mode, i) => (
          <button
            key={mode.name}
            role="tab"
            aria-selected={i === 0}
            className={`${mode.width} leading-4 ${i === 0 ? 'bg-[#2d2d2d] text-[#5a9ae6]' : 'border-l border-[#6e6e6e]'}`}
          >
            {mode.name}
          </button>
        ))}
      </div>

      <div className="flex justify-between pr-[14px] pl-[14px]">
        <div className="pt-[17px]">
          <FindField id="find-what" label="Find what:" />
          <div className="mt-[9px]"><FindField id="change-to" label="Change to:" /></div>
          <div className="mt-[7px] flex items-center">
            <label htmlFor="scope" className="w-[51px]">Search:</label>
            <Select id="scope" value="Story" width="w-[170px]" size="text-[12px]" />
          </div>
          <div className="mt-1 flex gap-[7px] pl-px text-[#c8c8c8]">
            {SEARCH_OPTIONS.map((o) => (
              <button key={o.name} aria-label={o.name} className={`flex h-[21px] w-6 items-center justify-center rounded-[3px] ${o.on ? 'bg-[#2d2d2d]' : ''}`}>
                {o.icon}
              </button>
            ))}
          </div>
          <div className="mt-[9px]"><FormatBox label="Find Format:" /></div>
          <div className="mt-[17px]"><FormatBox label="Change Format:" /></div>
        </div>

        <div className="w-[107px] pt-[17px]">
          <fieldset className="h-[86px] border border-[#474747] pl-[15px]">
            <legend className="-ml-[5px] px-1 leading-[18px]">Direction</legend>
            <div className="mt-2 flex flex-col gap-2">
              {['Forward', 'Backward'].map((d) => (
                <label key={d} className="flex items-center gap-[7px] leading-4">
                  <input type="radio" name="direction" defaultChecked={d === 'Forward'} className="size-[13px] appearance-none rounded-full border border-[#c8c8c8] checked:border-[4px]" />
                  {d}
                </label>
              ))}
            </div>
          </fieldset>
          <div className="mt-[11px] flex flex-col gap-[5px]">
            {['Find Next', 'Change', 'Change All', 'Change/Find'].map((b) => (
              <button key={b} disabled className="h-[26px] rounded-full bg-[#585858] text-[#7e7e7e]">{b}</button>
            ))}
            <button className="mt-1 h-[26px] rounded-full border border-[#f0f0f0]">Fewer Options</button>
          </div>
        </div>
      </div>
    </div>

    <div className="mt-[15px] mr-[15px] flex justify-end">
      <button className="h-[26px] w-[90px] rounded-full border border-[#f0f0f0]">Done</button>
    </div>

    <span className="absolute top-[139px] left-[18px] size-2 rounded-full bg-[#f01010]" />
    <span className="absolute top-[191px] left-[18px] size-2 rounded-full bg-[#f01010]" />
    <span className="absolute top-[191px] left-[36px] size-2 rounded-full bg-[#f01010]" />
  </section>
);

/* ---------- status bar ---------- */

const StatusBar = () => (
  <footer className="flex h-[18px] shrink-0 items-center border-b-2 border-[#2a2a2a] bg-[#4b4b4b] text-[11px] text-[#ececec]">
    <div className="flex h-full w-[450px] shrink-0 items-center bg-[#535353]">
      <button aria-label="First page" className="ml-3"><Icon w={9} h={8} className="text-[#858585]"><path d="M1.5 0 V8" strokeWidth="2" /><path d="M9 0 V8 L4 4z" fill="currentColor" stroke="none" /></Icon></button>
      <button aria-label="Previous page" className="ml-[14px]"><Icon w={5} h={8} className="text-[#858585]"><path d="M5 0 V8 L0 4z" fill="currentColor" stroke="none" /></Icon></button>
      <div className="ml-3 flex h-4 w-[90px] rounded-[3px] border border-[#6e6e6e] bg-[#454545]">
        <input aria-label="Page" defaultValue="1" className="min-w-0 flex-1 pl-1 leading-[14px] outline-none" />
        <button aria-label="Page list" className="flex w-[18px] items-center justify-center border-l border-[#6e6e6e]"><Chevron /></button>
      </div>
      <button aria-label="Next page" className="ml-[14px]"><Icon w={5} h={8} className="text-[#858585]"><path d="M0 0 V8 L5 4z" fill="currentColor" stroke="none" /></Icon></button>
      <button aria-label="Last page" className="ml-[14px]"><Icon w={9} h={8} className="text-[#858585]"><path d="M7.5 0 V8" strokeWidth="2" /><path d="M0 0 V8 L5 4z" fill="currentColor" stroke="none" /></Icon></button>
      <button aria-label="Open in Bridge" className="ml-4">
        <Icon w={17} h={14}>
          <path d="M3 11 A5 5 0 1 1 12 9 M7 3 V8 H10" strokeWidth="2.2" />
          <path d="M13 10 h3 v3 h-3z" fill="currentColor" stroke="none" />
        </Icon>
      </button>
      <button className="ml-[15px] flex w-[111px] items-center justify-between">[Basic] (working) <Chevron /></button>
      <span className="ml-[15px] size-[11px] rounded-full bg-[#f23c3c]" />
      <button className="ml-[6px] flex w-[71px] items-center justify-between">1 error <Chevron /></button>
    </div>
    <button aria-label="Scroll left" className="ml-1"><Chevron dir="left" className="text-[#8c8c8c]" /></button>
    <div className="flex h-full flex-1 items-center px-[14px]">
      <div className="h-[15px] w-3/4 rounded-full bg-[#696969]" />
    </div>
    <button aria-label="Scroll right"><Chevron dir="right" className="text-[#8c8c8c]" /></button>
    <div className="ml-2 flex h-full w-[34px] items-center bg-[#535353]">
      <button aria-label="Split view"><Icon w={16} h={12}><path d="M.5 .5 h15 v11 h-15 z M8 0 V12" strokeWidth="1.3" /></Icon></button>
    </div>
  </footer>
);

const App: React.FC = () => {
  return (
    <div className="relative flex h-screen flex-col overflow-hidden bg-[#5e5e5e] font-[Roboto,sans-serif] select-none">
      <MenuBar />
      <ControlBar />

      <div className="flex h-[29px] shrink-0 bg-[#424242]">
        <div className="flex w-[142px] items-center gap-2 bg-[#535353] pt-[2px] pl-[15px] text-[12px] font-bold whitespace-nowrap text-[#f0f0f0]">
          *Untitled-1 @ 81%
          <button aria-label="Close document"><Icon w={7} h={7} className="text-white"><path d="M1 1 L6 6 M6 1 L1 6" strokeWidth="1.8" /></Icon></button>
        </div>
      </div>

      <div className="flex min-h-0 flex-1">
        <div className="flex min-w-0 flex-1 flex-col">
          <div className="flex shrink-0">
            <div className="h-[17px] w-4 border-r border-b border-[#8a8a8a] bg-[#1c1c1c]">
              <Icon w={15} h={16} className="text-[#8a8a8a]"><path d="M5.5 1 V16 M1 6.5 H15" strokeDasharray="1 1" /></Icon>
            </div>
            <HorizontalRuler />
          </div>
          <div className="flex min-h-0 flex-1">
            <VerticalRuler />
            <main className="relative min-w-0 flex-1 overflow-hidden">
              <DocumentPage />
              <ToolsPanel />
            </main>
          </div>
        </div>
        <div className="flex w-4 shrink-0 flex-col items-center border-r border-[#3a3a3a] bg-[#4b4b4b] py-[3px]">
          <button aria-label="Scroll up"><Chevron dir="up" className="text-[#8c8c8c]" /></button>
          <div className="mt-[86px] mb-[84px] w-[14px] flex-1 rounded-full bg-[#696969]" />
          <button aria-label="Scroll down"><Chevron className="text-[#8c8c8c]" /></button>
        </div>
      </div>

      <StatusBar />
      <FindChangeDialog />
    </div>
  );
};

export default App;
